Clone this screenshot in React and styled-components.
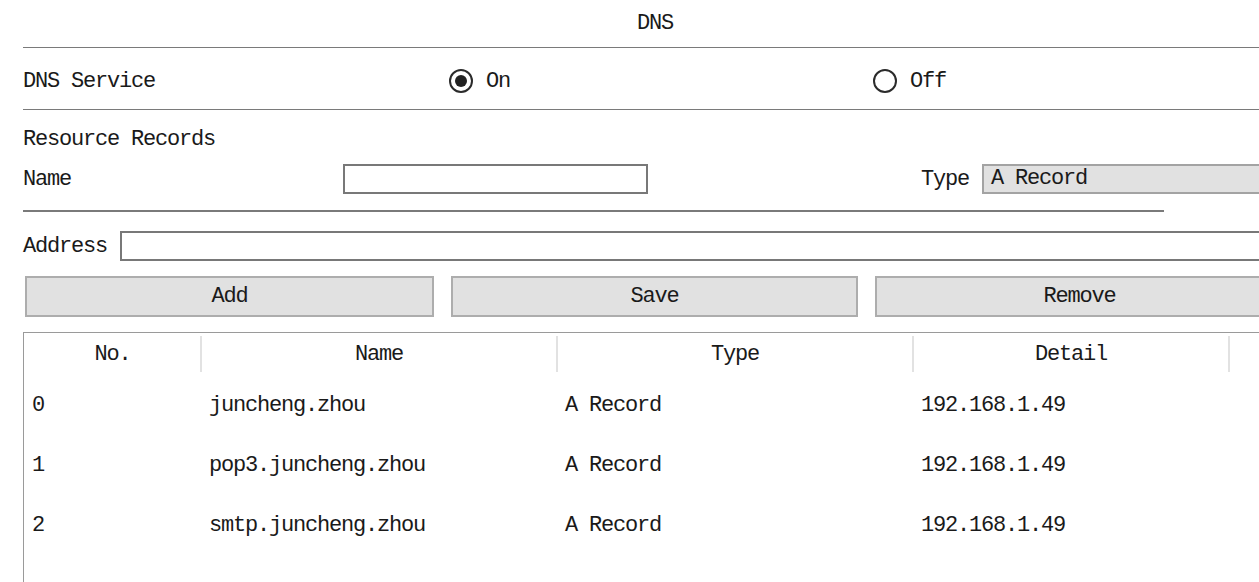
import React, { useState } from "react";
import styled, { createGlobalStyle } from "styled-components";

const records = [
  { no: 0, name: "juncheng.zhou", type: "A Record", detail: "192.168.1.49" },
  { no: 1, name: "pop3.juncheng.zhou", type: "A Record", detail: "192.168.1.49" },
  { no: 2, name: "smtp.juncheng.zhou", type: "A Record", detail: "192.168.1.49" },
];

const DnsPanel = () => {
  const [service, setService] = useState("on");

  return (
    <Page>
      <Title>DNS</Title>
      <Divider />
      <ServiceRow>
        <Label>DNS Service</Label>
        <RadioOption onClick={() => setService("on")}>
          <RadioDot checked={service === "on"} />
          <span>On</span>
        </RadioOption>
        <RadioOption onClick={() => setService("off")}>
          <RadioDot checked={service === "off"} />
          <span>Off</span>
        </RadioOption>
      </ServiceRow>
      <Divider />
      <Heading>Resource Records</Heading>
      <NameRow>
        <NameLabel>Name</NameLabel>
        <TextBox width="305px" />
        <TypeLabel>Type</TypeLabel>
        <Select>A Record</Select>
      </NameRow>
      <ShortRule />
      <AddressRow>
        <Label>Address</Label>
        <TextBox grow />
      </AddressRow>
      <ButtonRow>
        <Button>Add</Button>
        <Button>Save</Button>
        <Button>Remove</Button>
      </ButtonRow>
      <Table>
        <HeadCell>No.</HeadCell>
        <HeadCell>Name</HeadCell>
        <HeadCell>Type</HeadCell>
        <HeadCell>Detail</HeadCell>
        <HeadCell last />
        {records.map((r) => (
          <React.Fragment key={r.no}>
            <Cell>{r.no}</Cell>
            <Cell>{r.name}</Cell>
            <Cell>{r.type}</Cell>
            <Cell>{r.detail}</Cell>
            <Cell />
          </React.Fragment>
        ))}
      </Table>
    </Page>
  );
};

export default function App() {
  return (
    <>
      <GlobalStyle />
      <DnsPanel />
    </>
  );
}

const GlobalStyle = createGlobalStyle`
  html, body {
    margin: 0;
    padding: 0;
    background: #fff;
    overflow: hidden;
  }
  body {
    font-family: "Liberation Mono", "DejaVu Sans Mono", monospace;
    font-size: 22px;
    letter-spacing: -1.2px;
    color: #1a1a1a;
  }
`;

const Page = styled.div`
  width: 1276px;
  margin-left: 23px;
  height: 582px;
`;

const Title = styled.div`
  height: 47px;
  line-height: 47px;
  text-align: center;
  padding-right: 12px;
`;

const Divider = styled.div`
  height: 1px;
  background: #7a7a7a;
`;

const ServiceRow = styled.div`
  display: grid;
  grid-template-columns: 426px 424px 1fr;
  align-items: center;
  height: 61px;
  padding-top: 5px;
  box-sizing: border-box;
`;

const Label = styled.span`
  white-space: nowrap;
`;

const RadioOption = styled.label`
  display: flex;
  align-items: center;
  gap: 13px;
  cursor: pointer;
`;

const RadioDot = styled.span`
  width: 24px;
  height: 24px;
  box-sizing: border-box;
  border: 2px solid #2b2b2b;
  border-radius: 50%;
  display: flex;
  align-items: center;
  justify-content: center;
  &::after {
    content: "";
    width: 12px;
    height: 12px;
    border-radius: 50%;
    background: ${(p) => (p.checked ? "#222" : "transparent")};
  }
`;

const Heading = styled.div`
  margin-top: 17px;
  line-height: 26px;
`;

const NameRow = styled.div`
  display: flex;
  align-items: center;
  margin-top: 11px;
  height: 30px;
`;

const NameLabel = styled.span`
  width: 320px;
`;

const TypeLabel = styled.span`
  margin-left: 273px;
  margin-right: 13px;
`;

const TextBox = styled.div`
  width: ${(p) => (p.grow ? "auto" : p.width)};
  flex: ${(p) => (p.grow ? 1 : "none")};
  height: 30px;
  box-sizing: border-box;
  border: 2px solid #787878;
  background: #fff;
`;

const Select = styled.div`
  width: 300px;
  height: 30px;
  box-sizing: border-box;
  border: 2px solid #a3a3a3;
  background: #e1e1e1;
  padding-left: 7px;
  line-height: 26px;
`;

const ShortRule = styled.div`
  width: 1141px;
  height: 2px;
  margin-top: 16px;
  background: #7a7a7a;
`;

const AddressRow = styled.div`
  display: flex;
  align-items: center;
  gap: 13px;
  margin-top: 19px;
  height: 30px;
`;

const ButtonRow = styled.div`
  display: grid;
  grid-template-columns: 409px 407px 409px;
  gap: 17px;
  margin-top: 15px;
  padding-left: 2px;
`;

const Button = styled.button`
  height: 41px;
  box-sizing: border-box;
  border: 2px solid #adadad;
  background: #e1e1e1;
  font: inherit;
  letter-spacing: inherit;
  color: inherit;
  padding: 0;
`;

const Table = styled.div`
  margin-top: 15px;
  display: grid;
  grid-template-columns: 177px 356px 356px 316px 1fr;
  grid-auto-rows: 60px;
  grid-template-rows: 42px;
  border-top: 1px solid #9a9a9a;
  border-left: 1px solid #9a9a9a;
  height: 260px;
`;

const HeadCell = styled.div`
  display: flex;
  align-items: center;
  justify-content: center;
  position: relative;
  &::after {
    content: "";
    display: ${(p) => (p.last ? "none" : "block")};
    position: absolute;
    right: -1px;
    top: 3px;
    bottom: 3px;
    width: 2px;
    background: #e2e2e2;
  }
`;

const Cell = styled.div`
  display: flex;
  align-items: center;
  padding-left: 8px;
  white-space: nowrap;
`;
